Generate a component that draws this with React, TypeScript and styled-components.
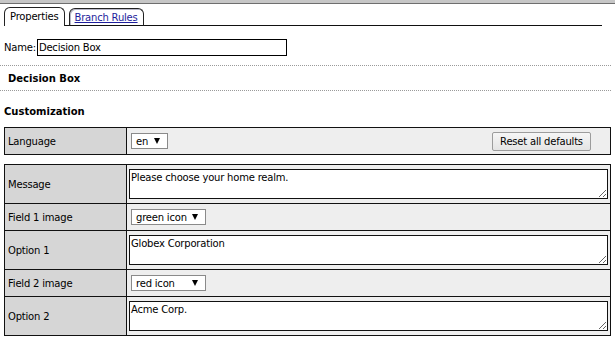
import React from "react";
import styled, { createGlobalStyle } from "styled-components";

const Global = createGlobalStyle`
  html, body { margin: 0; padding: 0; background: #fff; }
  body {
    font-family: "DejaVu Sans", Verdana, sans-serif;
    font-size: 10px;
    letter-spacing: -0.2px;
    color: #000;
  }
  * { box-sizing: border-box; }
  input, textarea, button { letter-spacing: inherit; }
`;

const Page = styled.div`
  width: 615px;
  height: 354px;
  overflow: hidden;
`;

const TopBar = styled.div`
  height: 4px;
  background: #c6c6c6;
  border-bottom: 1px solid #6e6e6e;
`;

const TabStrip = styled.div`
  margin: 3px 0 0 4px;
  width: 598px;
  height: 19px;
  display: flex;
  align-items: flex-end;
  background: linear-gradient(#111, #111) bottom / 100% 1px no-repeat;
`;

const Tab = styled.div<{ $active?: boolean }>`
  height: ${(p) => (p.$active ? "19px" : "18px")};
  padding: 0 5px ${(p) => (p.$active ? "1px" : "0")} 5px;
  margin-right: 4px;
  display: flex;
  align-items: center;
  background: #fff;
  border: 1px solid #222;
  border-bottom: ${(p) => (p.$active ? "none" : "1px solid #111")};
  border-radius: 6px 6px 0 0;
  box-shadow: ${(p) => (p.$active ? "none" : "inset 1px 1px 0 #b8b8c8")};
`;

const TabLink = styled.span`
  color: #1d1d9c;
  text-decoration: underline;
`;

const NameRow = styled.div`
  margin-top: 13px;
  height: 17px;
  padding-left: 4px;
  display: flex;
  align-items: center;
`;

const NameLabel = styled.span`
  margin-right: 1px;
`;

const NameInput = styled.input`
  width: 250px;
  height: 17px;
  border: 1px solid #000;
  padding: 0 1px;
  font: inherit;
  outline: none;
`;

const Divider = styled.div<{ $gap?: number }>`
  margin-top: ${(p) => p.$gap ?? 0}px;
  width: 611px;
  border-top: 1px dotted #9a9a9a;
`;

const SectionTitle = styled.div`
  height: 24px;
  padding-left: 8px;
  display: flex;
  align-items: center;
  font-weight: bold;
  letter-spacing: 0;
`;

const GroupTitle = styled.div`
  padding: 14px 0 0 4px;
  line-height: 13px;
  font-weight: bold;
  letter-spacing: 0;
  margin-bottom: 9px;
`;

const Table = styled.div<{ $gap?: number }>`
  margin: ${(p) => p.$gap ?? 0}px 0 0 4px;
  width: 607px;
  border: 1px solid #111;
`;

const Row = styled.div<{ $tall?: boolean }>`
  box-sizing: content-box;
  display: grid;
  grid-template-columns: 122px 1fr;
  height: ${(p) => (p.$tall ? "38px" : "26px")};
  border-bottom: 1px solid #111;
  &:last-child {
    border-bottom: none;
  }
`;

const LabelCell = styled.div`
  background: #d6d6d6;
  border-right: 1px solid #111;
  padding-left: 3px;
  display: flex;
  align-items: center;
`;

const ValueCell = styled.div<{ $pad?: string }>`
  background: #eeeeee;
  padding: ${(p) => p.$pad ?? "0 0 0 4px"};
  display: flex;
  align-items: center;
  justify-content: space-between;
`;

const SelectBox = styled.div<{ $w: number }>`
  width: ${(p) => p.$w}px;
  height: 16px;
  background: #fff;
  border: 1px solid #8a8a8a;
  padding: 0 7px 0 4px;
  display: flex;
  align-items: center;
  justify-content: space-between;
`;

const Arrow = () => (
  <svg width="6" height="6" viewBox="0 0 6 6">
    <polygon points="0,0 6,0 3,6" fill="#000" />
  </svg>
);

const Button = styled.button`
  width: 99px;
  height: 19px;
  font: inherit;
  color: #000;
  background: linear-gradient(#f6f6f6, #e4e4e4);
  border: 1px solid #9c9c9c;
  border-radius: 2px;
  padding: 0;
`;

const TextBox = styled.textarea`
  width: 479px;
  height: 30px;
  border: 1px solid #111;
  padding: 1px 1px;
  font: inherit;
  line-height: 13px;
  outline: none;
  margin-left: -2px;
`;

const Select = ({ value, w }: { value: string; w: number }) => (
  <SelectBox $w={w}>
    <span>{value}</span>
    <Arrow />
  </SelectBox>
);

export default function App() {
  return (
    <Page>
      <Global />
      <TopBar />
      <TabStrip>
        <Tab $active>Properties</Tab>
        <Tab>
          <TabLink>Branch Rules</TabLink>
        </Tab>
      </TabStrip>
      <NameRow>
        <NameLabel>Name:</NameLabel>
        <NameInput defaultValue="Decision Box" />
      </NameRow>
      <Divider $gap={9} />
      <SectionTitle>Decision Box</SectionTitle>
      <Divider />
      <GroupTitle>Customization</GroupTitle>
      <Table>
        <Row>
          <LabelCell>Language</LabelCell>
          <ValueCell $pad="0 19px 0 4px">
            <Select value="en" w={37} />
            <Button>Reset all defaults</Button>
          </ValueCell>
        </Row>
      </Table>
      <Table $gap={9}>
        <Row $tall>
          <LabelCell>Message</LabelCell>
          <ValueCell>
            <TextBox defaultValue="Please choose your home realm." />
          </ValueCell>
        </Row>
        <Row>
          <LabelCell>Field 1 image</LabelCell>
          <ValueCell>
            <Select value="green icon" w={75} />
          </ValueCell>
        </Row>
        <Row $tall>
          <LabelCell>Option 1</LabelCell>
          <ValueCell>
            <TextBox defaultValue="Globex Corporation" />
          </ValueCell>
        </Row>
        <Row>
          <LabelCell>Field 2 image</LabelCell>
          <ValueCell>
            <Select value="red icon" w={75} />
          </ValueCell>
        </Row>
        <Row $tall>
          <LabelCell>Option 2</LabelCell>
          <ValueCell>
            <TextBox defaultValue="Acme Corp." />
          </ValueCell>
        </Row>
      </Table>
    </Page>
  );
}
